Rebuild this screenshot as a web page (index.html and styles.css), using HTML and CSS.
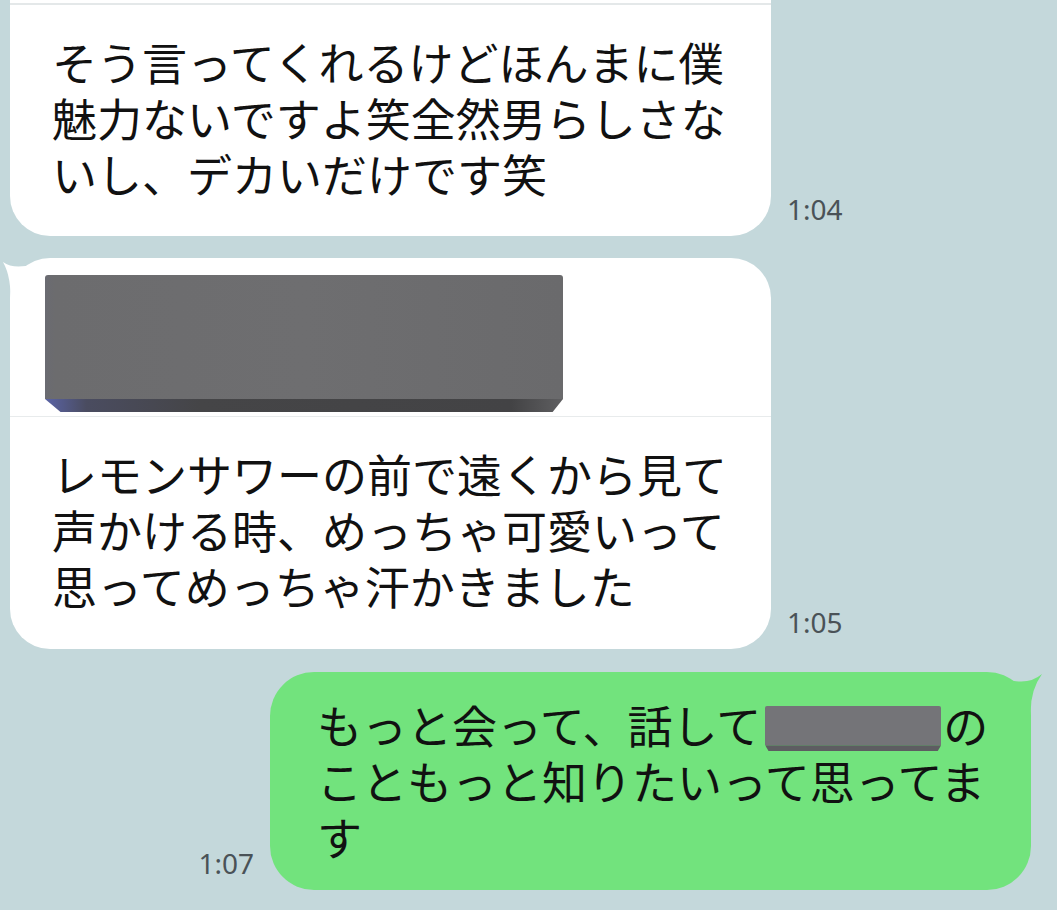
FILE: index.html
```html
<!DOCTYPE html>
<html lang="ja">

<head>
    <meta charset="UTF-8">
    <title>トーク</title>
    <link rel="stylesheet" href="styles.css">
</head>

<body>
    <main class="chat">
        <div class="row left">
            <div class="bubble first">
                <div class="media-edge"></div>
                <p class="msg">そう言ってくれるけどほんまに僕<br>魅力ないですよ笑全然男らしさな<br>いし、デカいだけです笑</p>
            </div>
            <span class="time">1:04</span>
        </div>

        <div class="row left">
            <div class="bubble tailed">
                <svg class="tail tail-left" width="40" height="50" viewBox="0 0 40 50">
                    <path d="M 3 4 Q 14 12 34 6 L 34 46 L 10 46 Q 12 20 3 4 Z" fill="#fff"/>
                </svg>
                <div class="media">
                    <div class="block"></div>
                    <div class="bevel"></div>
                </div>
                <p class="msg reply">レモンサワーの前で遠くから見て<br>声かける時、めっちゃ可愛いって<br>思ってめっちゃ汗かきました</p>
            </div>
            <span class="time">1:05</span>
        </div>

        <div class="row right">
            <span class="time">1:07</span>
            <div class="bubble mine">
                <svg class="tail tail-right" width="40" height="50" viewBox="0 0 40 50">
                    <path d="M 34 2 Q 21 13 2 8 L 2 46 L 23 46 Q 21 20 34 2 Z" fill="#72e37d"/>
                </svg>
                <p class="msg">もっと会って、話して<span class="hidden-name"><span class="hn-face"></span><span class="hn-bevel"></span></span>の<br>こともっと知りたいって思ってま<br>す</p>
            </div>
        </div>
    </main>
</body></html>
```

FILE: styles.css
```css
* {
    box-sizing: border-box;
    padding: 0;
    margin: 0;
}

body {
    background: #c4d8db;
    font-family: "Noto Sans CJK JP", "Noto Sans", sans-serif;
    color: #111;
    width: 1057px;
    height: 910px;
    overflow: hidden;
}

.chat {
    display: flex;
    flex-direction: column;
    gap: 22px;
}

.row {
    display: flex;
    align-items: flex-end;
    gap: 16px;
}

.row.left {
    padding-left: 10px;
}

.row.right {
    justify-content: flex-end;
    padding-right: 26px;
    margin-top: 1px;
}

.bubble {
    position: relative;
    width: 761px;
    background: #fff;
    border-radius: 40px;
}

.bubble.first {
    border-radius: 0 0 40px 40px;
}

.media-edge {
    height: 5px;
    border-bottom: 2px solid #e4e8e9;
}

.msg {
    position: relative;
    font-size: 45px;
    line-height: 56px;
    padding: 29px 20px 34px 42px;
    white-space: nowrap;
}

.msg.reply {
    padding-top: 29px;
    padding-bottom: 35px;
    border-top: 1px solid #e8ebec;
}

.tail {
    position: absolute;
    top: 0;
}

.tail-left {
    left: -10px;
}

.tail-right {
    right: -17px;
}

.media {
    padding: 17px 0 4px 35px;
}

.block {
    width: 518px;
    height: 124px;
    background: linear-gradient(to right, #6a6b72 0, #6c6c6e 2%, #6e6e70 50%, #6a6a6c 100%);
    border-radius: 3px 3px 0 0;
}

.bevel {
    width: 518px;
    height: 13px;
    background: linear-gradient(to right, #5a63a6 0, #4a4c60 8%, #454547 30%, #434345 90%, #5f5f61 100%);
    clip-path: polygon(0 0, 100% 0, 98% 100%, 3% 100%);
}

.bubble.mine {
    background: #72e37d;
    border-radius: 44px;
}

.mine .msg {
    padding: 25px 20px 25px 47px;
}

.hidden-name {
    display: inline-flex;
    flex-direction: column;
    vertical-align: middle;
    width: 176px;
    height: 45px;
    margin: -6px 2px 0 4px;
}

.hn-face {
    flex: 1;
    background: #747478;
    border-radius: 2px 2px 0 0;
}

.hn-bevel {
    height: 6px;
    background: #5d5d61;
    clip-path: polygon(0 0, 100% 0, 98% 100%, 2% 100%);
}

.time {
    font-family: "Noto Sans", "Liberation Sans", sans-serif;
    font-size: 28px;
    line-height: 28px;
    color: #4a5257;
    margin-bottom: 13px;
}
```
